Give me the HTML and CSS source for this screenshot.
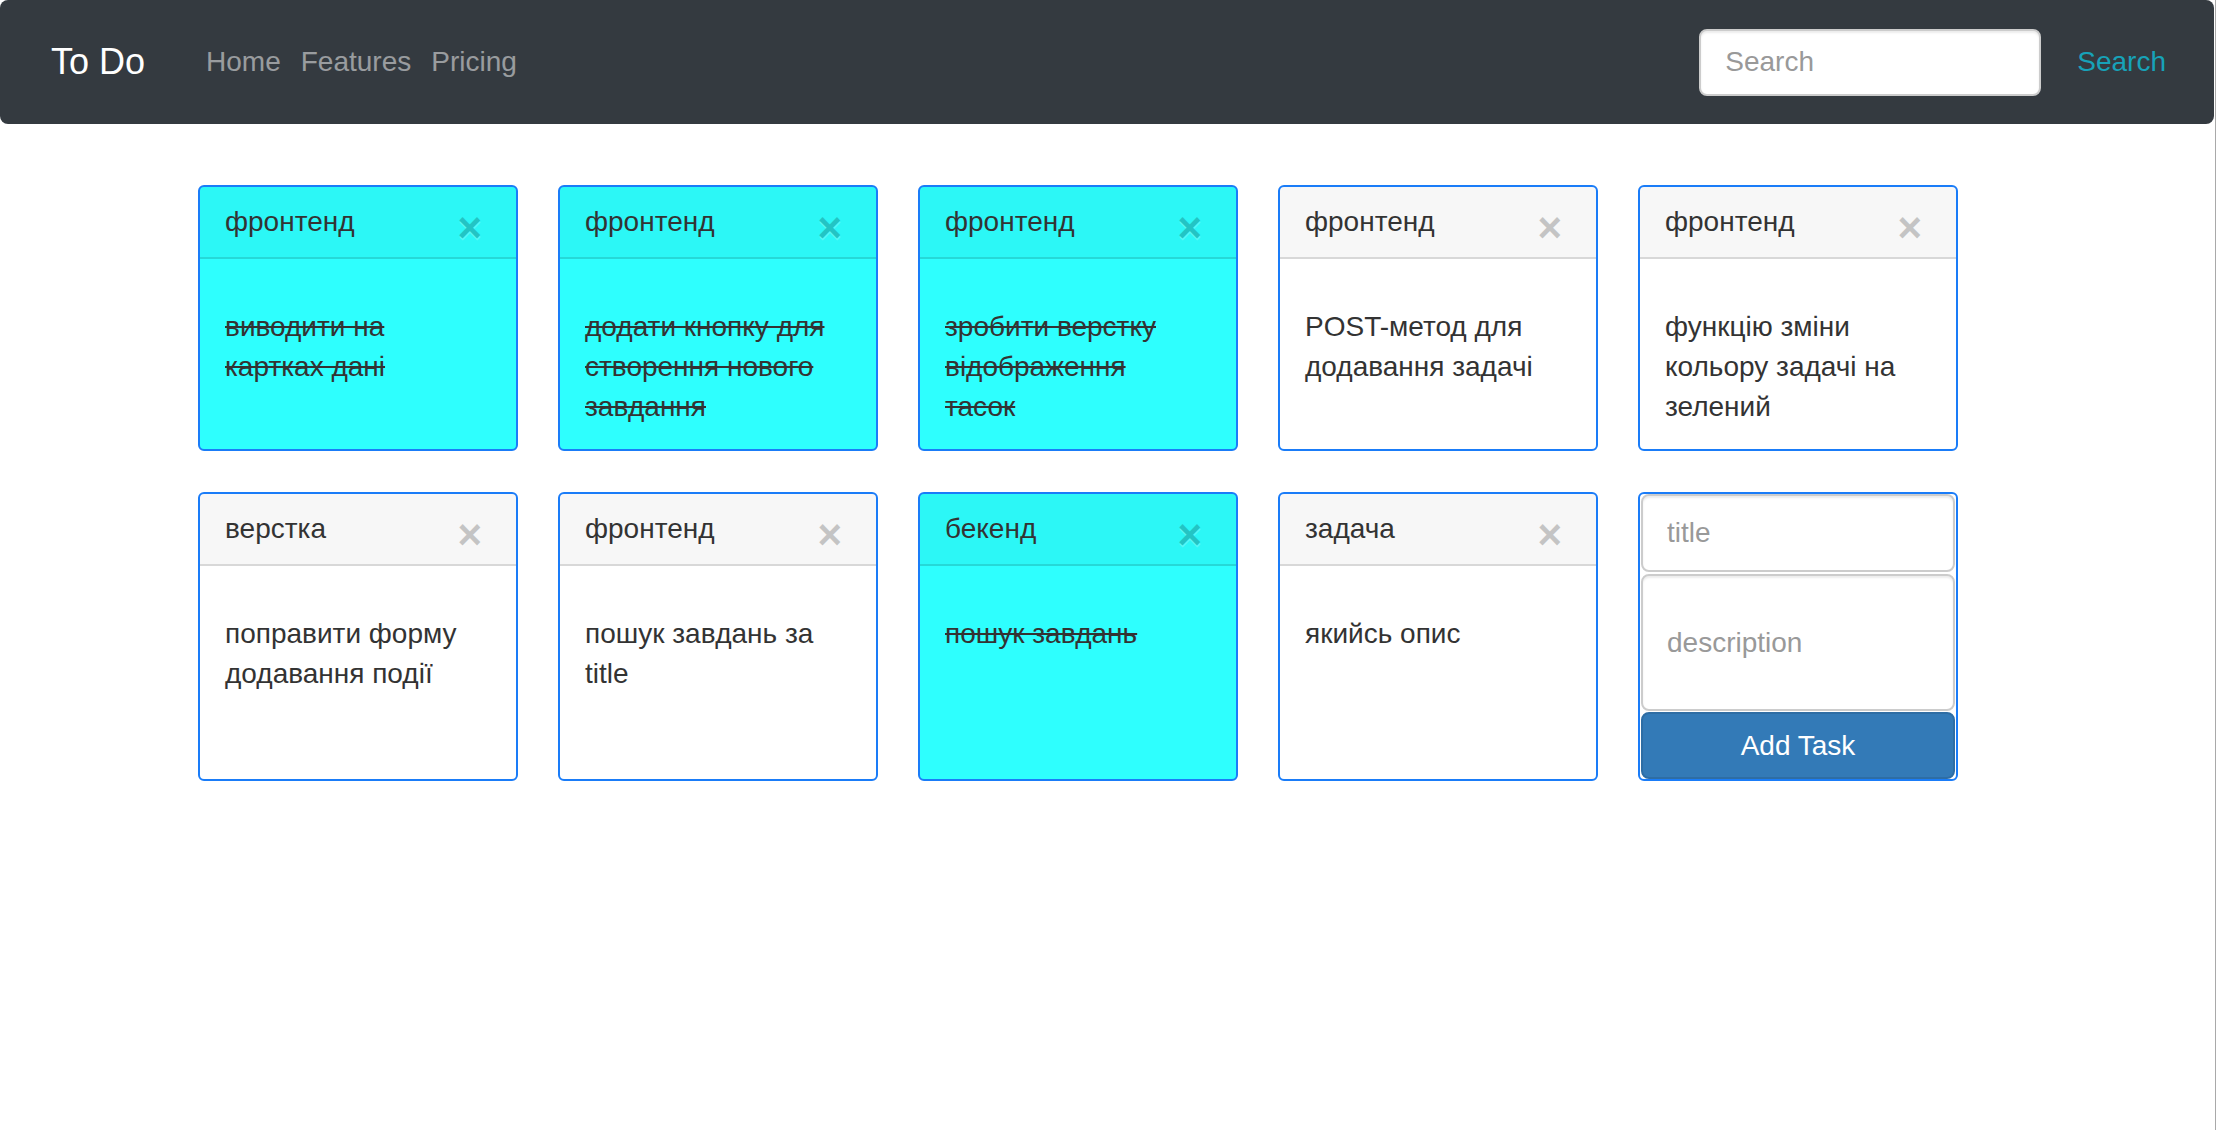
FILE: index.html
```html
<!DOCTYPE html>
<html lang="uk">
<head>
<meta charset="utf-8">
<title>To Do</title>
<link rel="stylesheet" href="styles.css">
</head>
<body>
<nav class="navbar">
  <a class="brand" href="#">To Do</a>
  <ul class="nav-links">
    <li><a href="#">Home</a></li>
    <li><a href="#">Features</a></li>
    <li><a href="#">Pricing</a></li>
  </ul>
  <form class="search">
    <input class="search-input" type="search" placeholder="Search">
    <button class="search-btn" type="button">Search</button>
  </form>
</nav>

<main class="board">
  <div class="card done">
    <div class="card-header"><span class="card-title">фронтенд</span><button class="close" type="button">×</button></div>
    <div class="card-body"><p class="card-text">виводити на картках дані</p></div>
  </div>
  <div class="card done">
    <div class="card-header"><span class="card-title">фронтенд</span><button class="close" type="button">×</button></div>
    <div class="card-body"><p class="card-text">додати кнопку для створення нового завдання</p></div>
  </div>
  <div class="card done">
    <div class="card-header"><span class="card-title">фронтенд</span><button class="close" type="button">×</button></div>
    <div class="card-body"><p class="card-text">зробити верстку відображення тасок</p></div>
  </div>
  <div class="card">
    <div class="card-header"><span class="card-title">фронтенд</span><button class="close" type="button">×</button></div>
    <div class="card-body"><p class="card-text">POST-метод для додавання задачі</p></div>
  </div>
  <div class="card">
    <div class="card-header"><span class="card-title">фронтенд</span><button class="close" type="button">×</button></div>
    <div class="card-body"><p class="card-text">функцію зміни кольору задачі на зелений</p></div>
  </div>

  <div class="card">
    <div class="card-header"><span class="card-title">верстка</span><button class="close" type="button">×</button></div>
    <div class="card-body"><p class="card-text">поправити форму додавання події</p></div>
  </div>
  <div class="card">
    <div class="card-header"><span class="card-title">фронтенд</span><button class="close" type="button">×</button></div>
    <div class="card-body"><p class="card-text">пошук завдань за title</p></div>
  </div>
  <div class="card done">
    <div class="card-header"><span class="card-title">бекенд</span><button class="close" type="button">×</button></div>
    <div class="card-body"><p class="card-text">пошук завдань</p></div>
  </div>
  <div class="card">
    <div class="card-header"><span class="card-title">задача</span><button class="close" type="button">×</button></div>
    <div class="card-body"><p class="card-text">якийсь опис</p></div>
  </div>
  <form class="card add-card">
    <input class="field field-title" type="text" placeholder="title">
    <input class="field field-desc" type="text" placeholder="description">
    <button class="add-btn" type="button">Add Task</button>
  </form>
</main>
</body>
</html>
```

FILE: styles.css
```css
* {
  box-sizing: border-box;
}

html {
  background: #ffffff;
}

body {
  margin: 0;
  min-height: 100vh;
  border-right: 1px solid #a9a9a9;
  font-family: "Liberation Sans", Arial, Helvetica, sans-serif;
  font-size: 28px;
  line-height: 40px;
  color: #333333;
}

/* ---------- navbar ---------- */
.navbar {
  display: flex;
  align-items: center;
  height: 124px;
  margin-right: 1px;
  padding: 0 48px 0 51px;
  background: #343a40;
  border-radius: 8px;
}

.brand {
  font-size: 36px;
  line-height: 50px;
  color: #ffffff;
  text-decoration: none;
  margin-right: 51px;
}

.nav-links {
  display: flex;
  list-style: none;
  margin: 0;
  padding: 0;
}

.nav-links a {
  display: block;
  padding: 0 10px;
  font-size: 28px;
  line-height: 40px;
  color: rgba(255, 255, 255, 0.5);
  text-decoration: none;
}

.search {
  display: flex;
  align-items: center;
  margin: 0 0 0 auto;
}

.search-input {
  width: 342px;
  height: 67px;
  padding: 0 24px;
  border: 2px solid #cccccc;
  border-radius: 8px;
  background: #ffffff;
  box-shadow: inset 0 2px 2px rgba(0, 0, 0, 0.075);
  font-family: inherit;
  font-size: 28px;
  color: #555555;
  outline: none;
}

.search-input::placeholder {
  color: #999999;
}

.search-btn {
  margin-left: 36px;
  padding: 0;
  border: 0;
  background: transparent;
  font-family: inherit;
  font-size: 28px;
  line-height: 40px;
  color: #17a2b8;
}

/* ---------- board ---------- */
.board {
  display: grid;
  grid-template-columns: repeat(5, 320px);
  column-gap: 40px;
  row-gap: 41px;
  padding: 61px 0 0 198px;
}

.card {
  display: flex;
  flex-direction: column;
  background: #ffffff;
  border: 2px solid #1a7cf8;
  border-radius: 6px;
  overflow: hidden;
}

.card.done {
  background: #2efffe;
}

.card-header {
  display: flex;
  justify-content: space-between;
  padding: 15px 25px;
  background: rgba(0, 0, 0, 0.03);
  border-bottom: 2px solid rgba(0, 0, 0, 0.125);
}

.card-title {
  font-size: 28px;
  line-height: 40px;
}

.close {
  align-self: flex-start;
  margin: 5px 9px -7px 0;
  padding: 0;
  border: 0;
  background: transparent;
  font-family: "Liberation Sans", Arial, sans-serif;
  font-size: 42px;
  font-weight: bold;
  line-height: 1;
  color: #000000;
  opacity: 0.2;
  text-shadow: 0 2px 0 #ffffff;
}

.card-body {
  flex: 1;
  padding: 48px 40px 22px 25px;
}

.card-text {
  margin: 0;
}

.done .card-text {
  text-decoration: line-through;
}

/* ---------- add task form ---------- */
.add-card {
  margin: 0;
  padding: 0 1px;
}

.field {
  display: block;
  width: 100%;
  padding: 0 24px;
  border: 2px solid #cccccc;
  border-radius: 8px;
  background: #ffffff;
  box-shadow: inset 0 2px 2px rgba(0, 0, 0, 0.075);
  font-family: inherit;
  font-size: 28px;
  color: #555555;
  outline: none;
}

.field::placeholder {
  color: #999999;
}

.field-title {
  height: 78px;
  margin-bottom: 2px;
}

.field-desc {
  height: 137px;
  margin-bottom: 1px;
}

.add-btn {
  display: block;
  width: 100%;
  height: 67px;
  border: 2px solid #2e6da4;
  border-radius: 8px;
  background: #337ab7;
  font-family: inherit;
  font-size: 28px;
  color: #ffffff;
}
```
